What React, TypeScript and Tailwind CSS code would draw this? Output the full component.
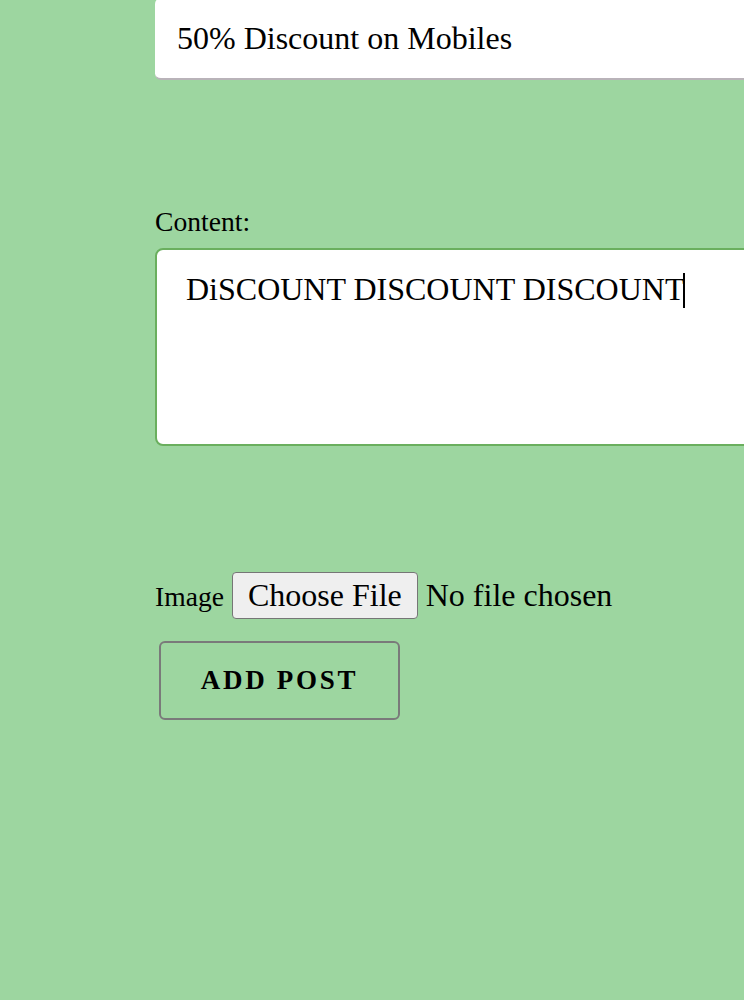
import React from 'react';

const serif = "font-['Liberation_Serif','Times_New_Roman',serif]";
const fieldFont = "!font-['Liberation_Serif',serif]";

const App: React.FC = () => {
  return (
    <div className={`w-[744px] h-[1000px] overflow-hidden bg-[#9dd6a0] text-black leading-[normal] ${serif}`}>
      <form className="pl-[155px] -mt-[2px]" onSubmit={(e) => e.preventDefault()}>
        <input
          type="text"
          defaultValue="50% Discount on Mobiles"
          className={`block w-[700px] h-[82px] bg-white rounded-[6px] border-b-2 border-[#b9b3b9] px-[22px] text-[32px] outline-none ${fieldFont}`}
        />

        <label className="block mt-[127px] text-[27.6px] leading-[30.6px]">Content:</label>
        <div className="relative mt-[10px] w-[700px]">
          <textarea
            defaultValue="DiSCOUNT DISCOUNT DISCOUNT"
            className={`block w-[700px] h-[198px] bg-white border-2 border-[#6aaf5e] rounded-[8px] pl-[29px] pt-[22px] text-[32px] leading-[35.4px] resize-none outline-none ${fieldFont}`}
          />
          {/* caret */}
          <div className="absolute left-[528px] top-[25px] w-[1.5px] h-[35px] bg-black" />
        </div>

        <div className="mt-[126px] flex items-baseline">
          <span className="text-[27.6px] mr-[8px]">Image</span>
          <input
            type="file"
            className={`text-[32px] leading-[normal] ${fieldFont} file:mr-[8px] file:px-[15px] file:py-[4px] file:border file:border-[#767676] file:rounded-[4px] file:bg-[#efefef] file:text-black file:leading-[normal]`}
          />
        </div>

        <button
          type="submit"
          className={`mt-[22px] ml-[4px] w-[241px] h-[79px] border-2 border-[#7a7a7a] rounded-[6px] font-bold text-[27px] tracking-[0.1em] flex items-center justify-center ${serif}`}
        >
          ADD POST
        </button>
      </form>
    </div>
  );
};

export default App;
